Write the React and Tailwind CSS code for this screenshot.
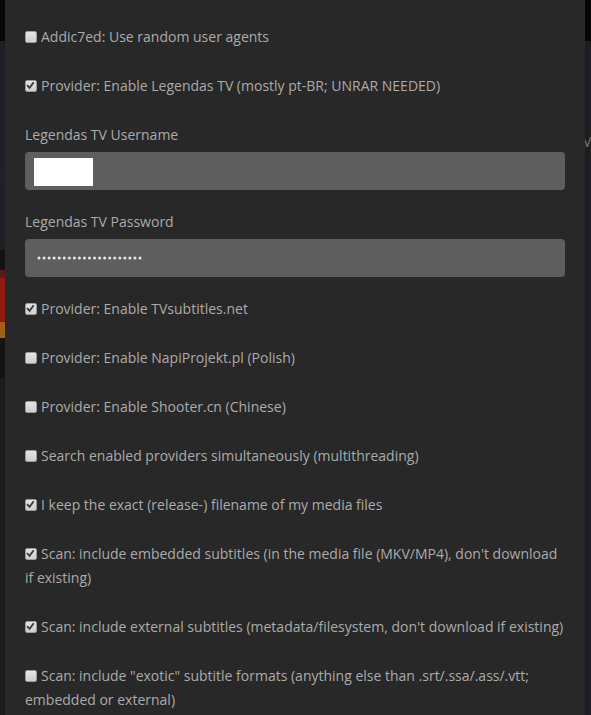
import React from "react";

function Box({ checked }) {
  return (
    <span className="inline-block w-[12px] h-[12px] mr-[4px] align-[-1px] bg-gradient-to-b from-[#e4e4e4] to-[#cfcfcf] border border-[#9a9a9a] rounded-[2px] relative">
      {checked && (
        <svg viewBox="0 0 12 12" className="absolute left-[0px] top-[0px] w-[10px] h-[10px]">
          <path d="M2 5.8 L4.3 8.2 L8.6 2.4" fill="none" stroke="#3a3a3a" strokeWidth="2.2" strokeLinecap="square" />
        </svg>
      )}
    </span>
  );
}

function Row({ checked, children, mb = "mb-[25px]" }) {
  return (
    <div className={`${mb} leading-[24px]`}>
      <Box checked={checked} />
      {children}
    </div>
  );
}

export default function App() {
  const dots = Array.from({ length: 21 });
  return (
    <div
      className="w-[591px] h-[715px] overflow-hidden flex bg-[#1b1e22]"
      style={{ fontFamily: '"Open Sans", "Liberation Sans", sans-serif' }}
    >
      <div className="w-[5px] flex flex-col shrink-0">
        <div className="h-[41px] bg-[#070707]" />
        <div className="h-[125px] bg-[#1c1f24]" />
        <div className="h-[14px] bg-[#1f2226]" />
        <div className="h-[70px] bg-[#1d2024]" />
        <div className="h-[20px] bg-[#121212]" />
        <div className="h-[8px] bg-[#5a1a14]" />
        <div className="h-[44px] bg-[#8e1a10]" />
        <div className="h-[16px] bg-[#a06018]" />
        <div className="h-[40px] bg-[#141414]" />
        <div className="flex-1 bg-[#1a1c20]" />
      </div>
      <div className="w-[580px] shrink-0 bg-[#282828] px-[20px] pt-[25px] text-[14px] text-[#ababab]">
        <Row checked={false}>Addic7ed: Use random user agents</Row>
        <Row checked={true}>Provider: Enable Legendas TV (mostly pt-BR; UNRAR NEEDED)</Row>
        <div className="leading-[24px]">Legendas TV Username</div>
        <div className="mt-[5px] mb-[20px] h-[38px] rounded-[4px] bg-[#5e5e5e] pl-[9px] pt-[6px]">
          <div className="w-[59px] h-[28px] bg-white" />
        </div>
        <div className="leading-[24px]">Legendas TV Password</div>
        <div className="mt-[5px] mb-[20px] h-[38px] rounded-[4px] bg-[#5e5e5e] pl-[12px] flex items-center">
          <svg width="110" height="6" viewBox="0 0 110 6">
            {dots.map((_, i) => (
              <circle key={i} cx={2 + i * 5.05} cy="3" r="1.5" fill="#e8e8e8" />
            ))}
          </svg>
        </div>
        <Row checked={true}>Provider: Enable TVsubtitles.net</Row>
        <Row checked={false}>Provider: Enable NapiProjekt.pl (Polish)</Row>
        <Row checked={false}>Provider: Enable Shooter.cn (Chinese)</Row>
        <Row checked={false}>Search enabled providers simultaneously (multithreading)</Row>
        <Row checked={true}>I keep the exact (release-) filename of my media files</Row>
        <Row checked={true}>
          Scan: include embedded subtitles (in the media file (MKV/MP4), don't download if existing)
        </Row>
        <Row checked={true}>
          <span className="whitespace-nowrap">Scan: include external subtitles (metadata/filesystem, don't download if existing)</span>
        </Row>
        <Row checked={false}>
          Scan: include "exotic" subtitle formats (anything else than .srt/.ssa/.ass/.vtt; embedded or external)
        </Row>
      </div>
      <div className="w-[6px] shrink-0 flex flex-col overflow-hidden">
        <div className="h-[41px] bg-[#050505]" />
        <div className="h-[90px] bg-[#1b1e22]" />
        <div className="h-[22px] bg-[#1b1e22] text-[14px] leading-[22px] text-[#7a7a7a] -ml-[2px]">V</div>
        <div className="flex-1 bg-[#1b1e22]" />
      </div>
    </div>
  );
}
